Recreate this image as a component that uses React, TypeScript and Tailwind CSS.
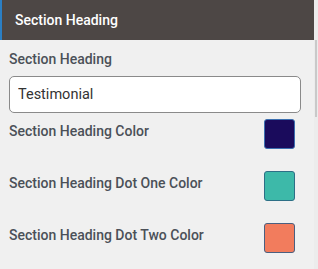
import React from "react";

const colorRows = [
  { label: "Section Heading Color", color: "#1a0b5c", border: "#3b6fb0" },
  { label: "Section Heading Dot One Color", color: "#3db9a9", border: "#2d6f86" },
  { label: "Section Heading Dot Two Color", color: "#f27c5d", border: "#4a5f80" },
];

export default function App() {
  return (
    <div className="flex h-[269px] w-[318px] overflow-hidden bg-[#f0f0f0] font-['Roboto',sans-serif]">
      <div className="flex w-[314px] flex-col">
        <div className="flex h-[40px] items-center border-l-2 border-[#2b7fc4] bg-[#4d4745] pl-[13px]">
          <span className="text-[14px] font-medium text-white">Section Heading</span>
        </div>

        <div className="flex flex-col pl-[9px] pr-[13px]">
          <label className="mt-[9px] text-[14px] leading-[20px] font-medium text-[#4b5058]">
            Section Heading
          </label>
          <input
            readOnly
            value="Testimonial"
            className="mt-[7px] h-[37px] w-full rounded-[5px] border border-[#8a8a8a] bg-white px-[8px] text-[14.5px] text-[#333] outline-none"
          />

          <div className="mt-[6px] flex flex-col gap-[22px]">
            {colorRows.map((row) => (
              <div key={row.label} className="flex items-start justify-between pr-[6px]">
                <span className="pt-[2px] text-[14px] leading-[20px] font-medium text-[#4b5058]">
                  {row.label}
                </span>
                <div
                  className="h-[30px] w-[31px] rounded-[3px] border"
                  style={{ backgroundColor: row.color, borderColor: row.border }}
                />
              </div>
            ))}
          </div>
        </div>
      </div>

      {/* scrollbar */}
      <div className="flex w-[4px] flex-col bg-[#ececec]">
        <div className="mt-[40px] ml-[1px] h-[77px] w-[2px] bg-[#c9c9c9]" />
      </div>
    </div>
  );
}
